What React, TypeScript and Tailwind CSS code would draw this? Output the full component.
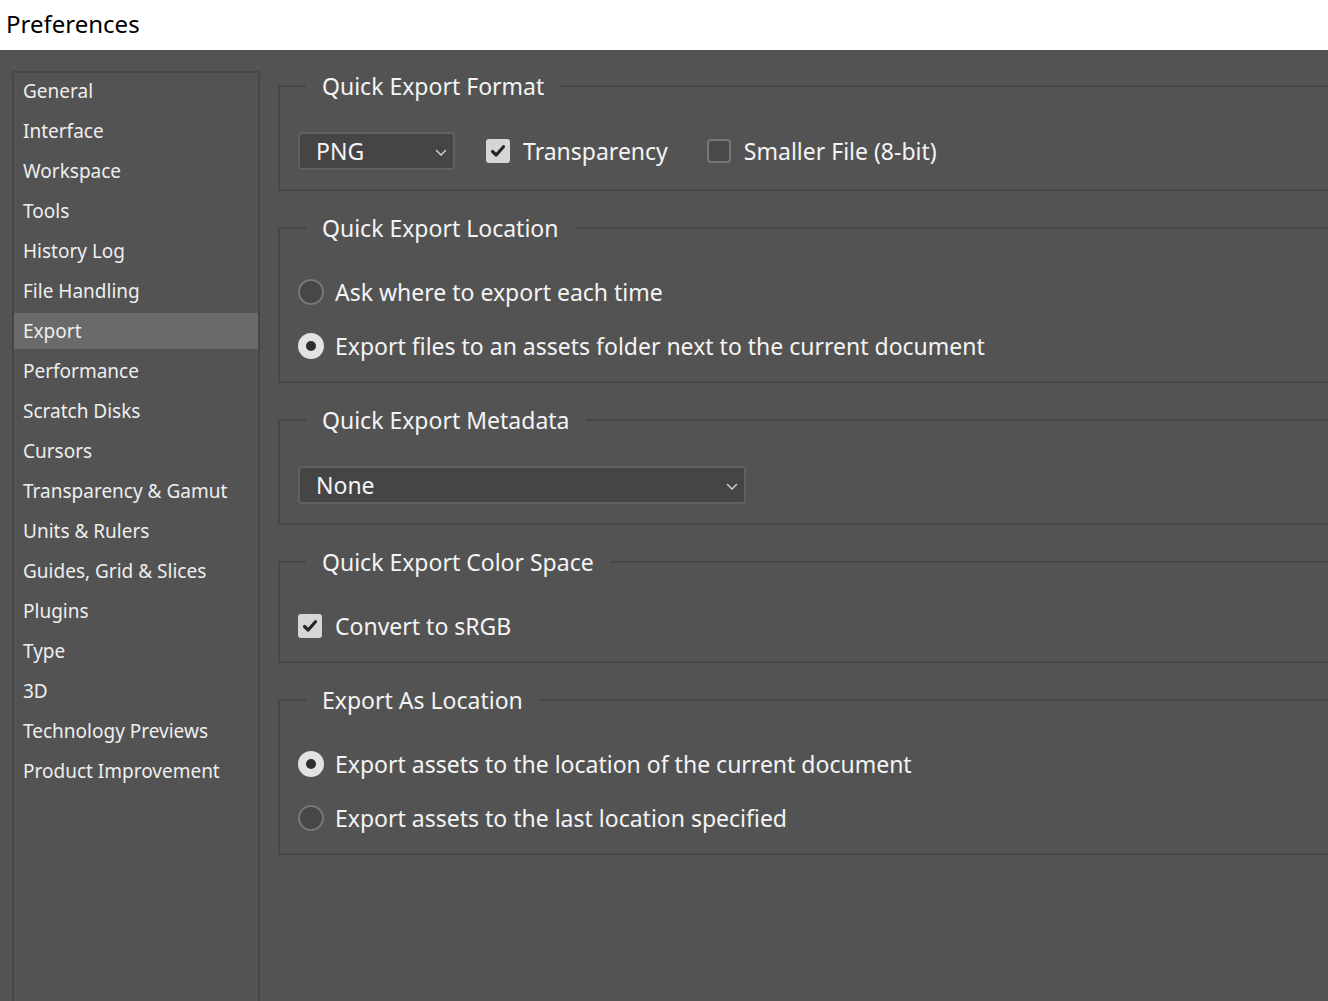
import React from 'react';

const FONT = "font-['Noto_Sans','Open_Sans',sans-serif]";

const NAV_ITEMS = [
  'General',
  'Interface',
  'Workspace',
  'Tools',
  'History Log',
  'File Handling',
  'Export',
  'Performance',
  'Scratch Disks',
  'Cursors',
  'Transparency & Gamut',
  'Units & Rulers',
  'Guides, Grid & Slices',
  'Plugins',
  'Type',
  '3D',
  'Technology Previews',
  'Product Improvement',
];

function Chevron() {
  return (
    <svg width="12" height="8" viewBox="0 0 12 8" fill="none" className="shrink-0 mt-[4px]">
      <path d="M1.5 1.5 L6 6 L10.5 1.5" stroke="#d8d8d8" strokeWidth="1.4" strokeLinecap="round" strokeLinejoin="round" />
    </svg>
  );
}

function Select({ value, width }: { value: string; width: string }) {
  return (
    <div
      className={`flex items-center justify-between h-[38px] ${width} pl-[16px] pr-[6px] bg-[#454545] border-2 border-[#606060] rounded-[4px] text-[23px] text-[#f4f4f4]`}
    >
      <span className="leading-none">{value}</span>
      <Chevron />
    </div>
  );
}

function Checkbox({ checked, label }: { checked: boolean; label: string }) {
  return (
    <div className="flex items-center gap-[13px]">
      {checked ? (
        <div className="w-[24px] h-[24px] rounded-[3px] bg-[#d6d6d6] flex items-center justify-center">
          <svg width="16" height="14" viewBox="0 0 16 14" fill="none">
            <path d="M2.5 7.5 L6.2 11 L13.5 2.8" stroke="#262626" strokeWidth="3.2" strokeLinecap="round" strokeLinejoin="round" />
          </svg>
        </div>
      ) : (
        <div className="w-[24px] h-[24px] rounded-[4px] bg-[#4a4a4a] border-2 border-[#777777]" />
      )}
      <span className="text-[23px] leading-none text-[#f4f4f4]">{label}</span>
    </div>
  );
}

function Radio({ checked, label }: { checked: boolean; label: string }) {
  return (
    <div className="flex items-center gap-[11px] h-[26px]">
      {checked ? (
        <div className="w-[26px] h-[26px] rounded-full bg-[#e2e2e2] flex items-center justify-center">
          <div className="w-[10px] h-[10px] rounded-full bg-[#2e2e2e]" />
        </div>
      ) : (
        <div className="w-[26px] h-[26px] rounded-full bg-[#474747] border-2 border-[#777777]" />
      )}
      <span className="text-[23px] leading-none text-[#f4f4f4]">{label}</span>
    </div>
  );
}

function Group({ title, className, children }: { title: string; className: string; children: React.ReactNode }) {
  return (
    <fieldset className={`border-2 border-[#464646] pl-[18px] ${className}`}>
      <legend className="ml-[8px] px-[16px] text-[23px] leading-[30px] text-[#f4f4f4]">{title}</legend>
      {children}
    </fieldset>
  );
}

export default function App() {
  return (
    <div className={`w-[1328px] h-[1001px] flex flex-col overflow-hidden ${FONT}`}>
      <div className="h-[50px] shrink-0 bg-white flex items-center px-[6px] pb-[3px]">
        <span className="text-[24px] text-black">Preferences</span>
      </div>

      <div className="flex-1 flex bg-[#535353] overflow-hidden">
        {/* Sidebar */}
        <div className="ml-[12px] mt-[21px] w-[248px] shrink-0 border-l-2 border-t-2 border-r-2 border-[#464646] flex flex-col gap-[4px]">
          {NAV_ITEMS.map((item) => (
            <div
              key={item}
              className={`h-[36px] flex items-center pl-[9px] pt-[1px] text-[19px] text-[#eeeeee] ${item === 'Export' ? 'bg-[#6a6a6a]' : ''}`}
            >
              {item}
            </div>
          ))}
        </div>

        {/* Content */}
        <div className="ml-[18px] mt-[21px] w-[1070px] shrink-0 flex flex-col gap-[22px]">
          <Group title="Quick Export Format" className="pt-[31px] pb-[19px]">
            <div className="flex items-center">
              <Select value="PNG" width="w-[157px]" />
              <div className="ml-[31px]">
                <Checkbox checked label="Transparency" />
              </div>
              <div className="ml-[39px]">
                <Checkbox checked={false} label="Smaller File (8-bit)" />
              </div>
            </div>
          </Group>

          <Group title="Quick Export Location" className="pt-[36px] pb-[22px]">
            <div className="flex flex-col gap-[28px]">
              <Radio checked={false} label="Ask where to export each time" />
              <Radio checked label="Export files to an assets folder next to the current document" />
            </div>
          </Group>

          <Group title="Quick Export Metadata" className="pt-[31px] pb-[19px]">
            <Select value="None" width="w-[448px]" />
          </Group>

          <Group title="Quick Export Color Space" className="pt-[37px] pb-[23px]">
            <div className="h-[24px] flex items-center">
              <Checkbox checked label="Convert to sRGB" />
            </div>
          </Group>

          <Group title="Export As Location" className="pt-[36px] pb-[22px]">
            <div className="flex flex-col gap-[28px]">
              <Radio checked label="Export assets to the location of the current document" />
              <Radio checked={false} label="Export assets to the last location specified" />
            </div>
          </Group>
        </div>
      </div>
    </div>
  );
}
